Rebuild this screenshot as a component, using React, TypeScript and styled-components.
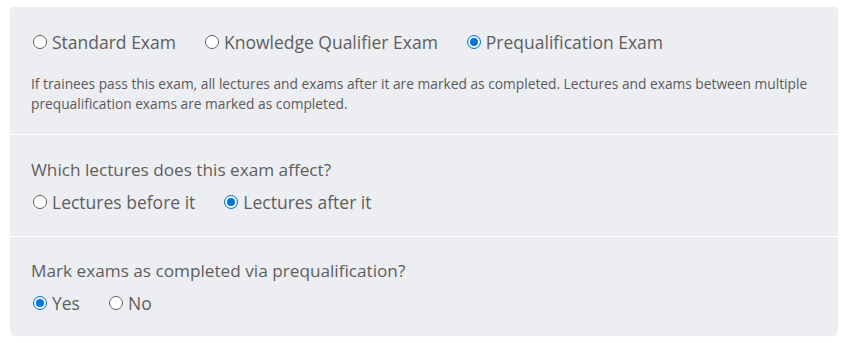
import React, { useState } from 'react'
import styled, { createGlobalStyle } from 'styled-components'

const GlobalStyle = createGlobalStyle`
  body {
    margin: 0;
    background: #ffffff;
    font-family: "Open Sans", "Liberation Sans", sans-serif;
  }
`

const Page = styled.div`
  padding: 7px 10px 6px 10px;
`

const Card = styled.div`
  background: #edeef2;
  border-radius: 5px;
  box-shadow: 0 0 1px rgba(0, 0, 0, 0.08);
  overflow: hidden;
`

const Section = styled.div<{ $pt: number; $pb: number }>`
  padding: ${p => p.$pt}px 21px ${p => p.$pb}px 21px;
  & + & {
    border-top: 1px solid #ffffff;
  }
`

const Question = styled.div`
  font-size: 17.2px;
  line-height: 24px;
  color: #5e5e5e;
  margin-bottom: 8px;
`

const RadioRow = styled.div`
  display: flex;
  align-items: center;
  gap: 27px;
`

const Option = styled.label`
  display: flex;
  align-items: center;
  gap: 5px;
  font-size: 17.5px;
  line-height: 24px;
  color: #5e5e5e;
  cursor: pointer;
`

const Dot = styled.span<{ $checked: boolean }>`
  box-sizing: border-box;
  width: 14px;
  height: 14px;
  margin-left: 2px;
  border-radius: 50%;
  flex-shrink: 0;
  background: #ffffff;
  border: ${p => (p.$checked ? '1px solid #0075d9' : '1px solid #606060')};
  box-shadow: ${p => (p.$checked ? 'inset 0 0 0 2px #ffffff, inset 0 0 0 8px #0075d9' : 'none')};
`

const Description = styled.p`
  margin: 20px 0 0 0;
  font-size: 13.75px;
  line-height: 20px;
  color: #5a5a5a;
`

interface RadioGroupProps {
  options: string[]
  value: string
  onChange: (v: string) => void
}

const RadioGroup: React.FC<RadioGroupProps> = ({ options, value, onChange }) => (
  <RadioRow>
    {options.map(o => (
      <Option key={o} onClick={() => onChange(o)}>
        <Dot $checked={o === value} />
        {o}
      </Option>
    ))}
  </RadioRow>
)

const App: React.FC = () => {
  const [type, setType] = useState('Prequalification Exam')
  const [affects, setAffects] = useState('Lectures after it')
  const [markExams, setMarkExams] = useState('Yes')

  return (
    <Page>
      <GlobalStyle />
      <Card>
        <Section $pt={23} $pb={20}>
          <RadioGroup
            options={['Standard Exam', 'Knowledge Qualifier Exam', 'Prequalification Exam']}
            value={type}
            onChange={setType}
          />
          <Description>
            If trainees pass this exam, all lectures and exams after it are marked as completed.
            Lectures and exams between multiple prequalification exams are marked as completed.
          </Description>
        </Section>
        <Section $pt={23} $pb={22}>
          <Question>Which lectures does this exam affect?</Question>
          <RadioGroup
            options={['Lectures before it', 'Lectures after it']}
            value={affects}
            onChange={setAffects}
          />
        </Section>
        <Section $pt={22} $pb={21}>
          <Question>Mark exams as completed via prequalification?</Question>
          <RadioGroup options={['Yes', 'No']} value={markExams} onChange={setMarkExams} />
        </Section>
      </Card>
    </Page>
  )
}

export default App
